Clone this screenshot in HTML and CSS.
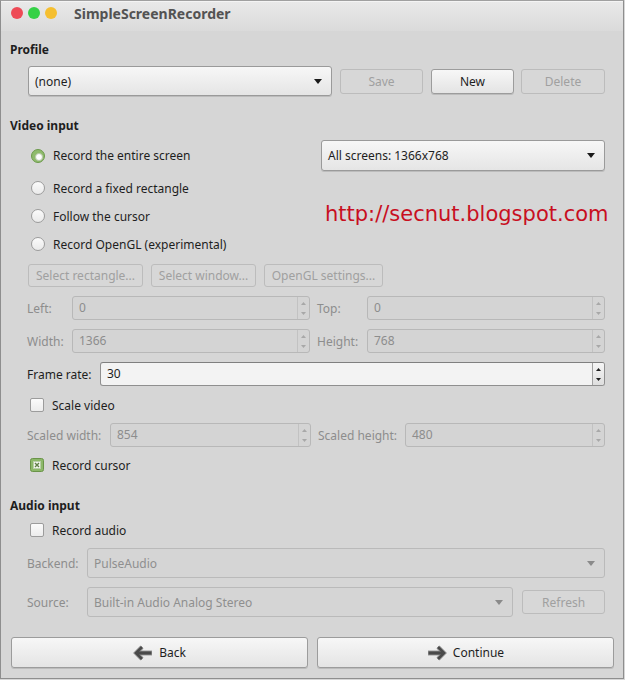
FILE: index.html
```html
<!DOCTYPE html>
<html>
<head>
<meta charset="utf-8">
<link rel="stylesheet" href="styles.css">
</head>
<body>
<div class="window">
  <div class="titlebar">
    <div class="lights">
      <span class="light red"></span>
      <span class="light green"></span>
      <span class="light yellow"></span>
    </div>
    <div class="title">SimpleScreenRecorder</div>
  </div>

  <div class="content">
    <div class="header mt9">Profile</div>
    <div class="row profile-row mt8">
      <div class="combo w-profile">
        <span class="combo-text">(none)</span>
        <svg class="drop" width="8" height="5" viewBox="0 0 8 5"><polygon points="0,0 8,0 4,5" fill="#1a1a1a"/></svg>
      </div>
      <div class="btn disabled w83">Save</div>
      <div class="btn w83">New</div>
      <div class="btn disabled w84 tight">Delete</div>
    </div>

    <div class="header mt20">Video input</div>
    <div class="row indent first-row mt6">
      <div class="choice">
        <span class="radio checked"></span>
        <span>Record the entire screen</span>
      </div>
      <div class="combo w-screens">
        <span class="combo-text">All screens: 1366x768</span>
        <svg class="drop" width="8" height="5" viewBox="0 0 8 5"><polygon points="0,0 8,0 4,5" fill="#1a1a1a"/></svg>
      </div>
    </div>
    <div class="row indent choice-row mt7">
      <div class="choice"><span class="radio"></span><span>Record a fixed rectangle</span></div>
    </div>
    <div class="row indent choice-row mt8">
      <div class="choice"><span class="radio"></span><span>Follow the cursor</span></div>
    </div>
    <div class="row indent choice-row mt8">
      <div class="choice"><span class="radio"></span><span>Record OpenGL (experimental)</span></div>
    </div>

    <div class="row indent button-row mt10">
      <div class="btn disabled small w115">Select rectangle...</div>
      <div class="btn disabled small w105">Select window...</div>
      <div class="btn disabled small w119">OpenGL settings...</div>
    </div>

    <div class="row indent field-row mt9">
      <span class="label disabled-text w45">Left:</span>
      <div class="spin disabled w238">
        <span class="val">0</span>
        <span class="arrows"><svg width="5" height="3" viewBox="0 0 5 3"><polygon points="2.5,0 5,3 0,3" fill="#a8a8a8"/></svg><svg width="5" height="3" viewBox="0 0 5 3"><polygon points="0,0 5,0 2.5,3" fill="#a8a8a8"/></svg></span>
      </div>
      <span class="label disabled-text w50 gap7">Top:</span>
      <div class="spin disabled w238">
        <span class="val">0</span>
        <span class="arrows"><svg width="5" height="3" viewBox="0 0 5 3"><polygon points="2.5,0 5,3 0,3" fill="#a8a8a8"/></svg><svg width="5" height="3" viewBox="0 0 5 3"><polygon points="0,0 5,0 2.5,3" fill="#a8a8a8"/></svg></span>
      </div>
    </div>
    <div class="row indent field-row mt9">
      <span class="label disabled-text w45">Width:</span>
      <div class="spin disabled w238">
        <span class="val">1366</span>
        <span class="arrows"><svg width="5" height="3" viewBox="0 0 5 3"><polygon points="2.5,0 5,3 0,3" fill="#a8a8a8"/></svg><svg width="5" height="3" viewBox="0 0 5 3"><polygon points="0,0 5,0 2.5,3" fill="#a8a8a8"/></svg></span>
      </div>
      <span class="label disabled-text w50 gap7">Height:</span>
      <div class="spin disabled w238">
        <span class="val">768</span>
        <span class="arrows"><svg width="5" height="3" viewBox="0 0 5 3"><polygon points="2.5,0 5,3 0,3" fill="#a8a8a8"/></svg><svg width="5" height="3" viewBox="0 0 5 3"><polygon points="0,0 5,0 2.5,3" fill="#a8a8a8"/></svg></span>
      </div>
    </div>
    <div class="row indent field-row mt9">
      <span class="label w73">Frame rate:</span>
      <div class="spin enabled grow">
        <span class="val">30</span>
        <span class="arrows"><svg width="5" height="3" viewBox="0 0 5 3"><polygon points="2.5,0 5,3 0,3" fill="#1e1e1e"/></svg><svg width="5" height="3" viewBox="0 0 5 3"><polygon points="0,0 5,0 2.5,3" fill="#1e1e1e"/></svg></span>
      </div>
    </div>

    <div class="row indent choice-row mt9">
      <div class="choice check-choice"><span class="checkbox"></span><span>Scale video</span></div>
    </div>

    <div class="row indent field-row mt8">
      <span class="label disabled-text w83">Scaled width:</span>
      <div class="spin disabled w201">
        <span class="val">854</span>
        <span class="arrows"><svg width="5" height="3" viewBox="0 0 5 3"><polygon points="2.5,0 5,3 0,3" fill="#a8a8a8"/></svg><svg width="5" height="3" viewBox="0 0 5 3"><polygon points="0,0 5,0 2.5,3" fill="#a8a8a8"/></svg></span>
      </div>
      <span class="label disabled-text w87 gap7">Scaled height:</span>
      <div class="spin disabled w200">
        <span class="val">480</span>
        <span class="arrows"><svg width="5" height="3" viewBox="0 0 5 3"><polygon points="2.5,0 5,3 0,3" fill="#a8a8a8"/></svg><svg width="5" height="3" viewBox="0 0 5 3"><polygon points="0,0 5,0 2.5,3" fill="#a8a8a8"/></svg></span>
      </div>
    </div>

    <div class="row indent choice-row mt8">
      <div class="choice check-choice">
        <svg class="checked-box" width="14" height="14" viewBox="0 0 14 14">
          <rect x="0.5" y="0.5" width="13" height="13" rx="2" fill="#8cb869" stroke="#6a9449"/>
          <rect x="3.5" y="3.5" width="7" height="7" fill="#f4f7f0" stroke="#b9cfa8"/>
          <path d="M5 5 L9 9 M9 5 L5 9" stroke="#5f7f46" stroke-width="1.4"/>
        </svg>
        <span>Record cursor</span>
      </div>
    </div>

    <div class="header mt21">Audio input</div>
    <div class="row indent choice-row mt6">
      <div class="choice check-choice"><span class="checkbox"></span><span>Record audio</span></div>
    </div>
    <div class="row indent combo-row mt8">
      <span class="label disabled-text w60">Backend:</span>
      <div class="combo disabled grow">
        <span class="combo-text">PulseAudio</span>
        <svg class="drop" width="8" height="5" viewBox="0 0 8 5"><polygon points="0,0 8,0 4,5" fill="#8a8a8a"/></svg>
      </div>
    </div>
    <div class="row indent combo-row mt9">
      <span class="label disabled-text w60">Source:</span>
      <div class="combo disabled w427">
        <span class="combo-text">Built-in Audio Analog Stereo</span>
        <svg class="drop" width="8" height="5" viewBox="0 0 8 5"><polygon points="0,0 8,0 4,5" fill="#8a8a8a"/></svg>
      </div>
      <div class="btn disabled small refresh w83">Refresh</div>
    </div>

    <div class="row bottom-row mt20">
      <div class="btn big">
        <svg class="nav-icon" width="20" height="16" viewBox="0 0 20 16">
          <path d="M9 2 L3 8 L9 14" fill="none" stroke="#9a9a9a" stroke-width="4.4" stroke-linejoin="miter"/>
          <path d="M4 8 H19" stroke="#9a9a9a" stroke-width="5"/>
          <path d="M9 2 L3 8 L9 14" fill="none" stroke="#4a4a4a" stroke-width="2.6" stroke-linejoin="miter"/>
          <path d="M4 8 H18.5" stroke="#4a4a4a" stroke-width="3.2"/>
        </svg>
        <span>Back</span>
      </div>
      <div class="btn big">
        <svg class="nav-icon" width="20" height="16" viewBox="0 0 20 16">
          <path d="M11 2 L17 8 L11 14" fill="none" stroke="#9a9a9a" stroke-width="4.4" stroke-linejoin="miter"/>
          <path d="M1 8 H16" stroke="#9a9a9a" stroke-width="5"/>
          <path d="M11 2 L17 8 L11 14" fill="none" stroke="#4a4a4a" stroke-width="2.6" stroke-linejoin="miter"/>
          <path d="M1.5 8 H16" stroke="#4a4a4a" stroke-width="3.2"/>
        </svg>
        <span>Continue</span>
      </div>
    </div>
  </div>

  <div class="watermark">http://secnut.blogspot.com</div>
</div>
</body>
</html>
```

FILE: styles.css
```css
* {
  box-sizing: border-box;
}

body {
  margin: 0;
  background: #d6d6d6;
  font-family: "Noto Sans", "Open Sans", sans-serif;
  font-size: 12px;
  color: #1e1e1e;
}

.window {
  position: relative;
  width: 624px;
  height: 679px;
  border: 1px solid #8e8e8e;
  border-top-color: #a0a0a0;
  background: #d6d6d6;
}

.titlebar {
  height: 30px;
  display: flex;
  align-items: flex-start;
  padding-left: 10px;
  background: linear-gradient(#e9e9e9, #dadada);
  border-top: 1px solid #f4f4f4;
}

.lights {
  display: flex;
  gap: 5px;
  margin-top: 5px;
}

.light {
  width: 12px;
  height: 12px;
  border-radius: 50%;
}

.light.red { background: #ee4a56; }
.light.green { background: #34d146; }
.light.yellow { background: #f5bf30; }

.title {
  margin-left: 17px;
  margin-top: 2px;
  line-height: 20px;
  font-size: 14px;
  font-weight: bold;
  color: #535353;
}

.content {
  display: flex;
  flex-direction: column;
  padding: 0 18px 0 9px;
}

.header {
  height: 18px;
  line-height: 19px;
  font-weight: bold;
  color: #1e1e1e;
}

.mt6 { margin-top: 6px; }
.mt7 { margin-top: 7px; }
.mt8 { margin-top: 8px; }
.mt9 { margin-top: 9px; }
.mt10 { margin-top: 10px; }
.mt20 { margin-top: 20px; }
.mt21 { margin-top: 21px; }

.row {
  display: flex;
  align-items: center;
}

.indent {
  margin-left: 17px;
}

.profile-row {
  margin-left: 18px;
  height: 30px;
  gap: 8px;
}

.tight {
  margin-left: -1px;
}

.first-row {
  height: 31px;
  justify-content: space-between;
}

.choice-row {
  height: 20px;
}

.button-row {
  height: 23px;
  margin-left: 18px;
  gap: 8px;
}

.field-row {
  height: 24px;
}

.combo-row {
  height: 30px;
}

.bottom-row {
  height: 31px;
  margin-left: 1px;
  margin-right: -9px;
  gap: 9px;
}

.choice {
  display: flex;
  align-items: center;
  gap: 8px;
  padding-left: 4px;
}

.check-choice {
  padding-left: 3px;
}

.radio {
  position: relative;
  width: 14px;
  height: 14px;
  border-radius: 50%;
  border: 1px solid #9c9c9c;
  background: linear-gradient(#fbfbfb, #eaeaea);
}

.radio.checked {
  background: #8fbb6c;
  border-color: #6c9a4c;
}

.radio.checked::after {
  content: "";
  position: absolute;
  left: 3px;
  top: 3px;
  width: 6px;
  height: 6px;
  border-radius: 50%;
  background: #fdfdfd;
  border: 1px solid #b8c8ac;
}

.checkbox {
  width: 14px;
  height: 14px;
  border: 1px solid #9c9c9c;
  border-radius: 2px;
  background: linear-gradient(#fbfbfb, #ececec);
}

.combo {
  height: 100%;
  display: flex;
  align-items: center;
  justify-content: space-between;
  padding: 0 9px 0 6px;
  border: 1px solid #9a9a9a;
  border-radius: 3px;
  background: linear-gradient(#f7f7f7, #e5e5e5);
  box-shadow: 0 1px 0 rgba(0, 0, 0, 0.12);
}

.combo.disabled {
  background: #d5d5d5;
  border-color: #bababa;
  color: #8f8f8f;
  box-shadow: none;
}

.w-profile { width: 304px; }
.w-screens { width: 284px; }
.w427 { width: 427px; }

.btn {
  height: 25px;
  display: flex;
  align-items: center;
  justify-content: center;
  gap: 6px;
  border: 1px solid #9c9c9c;
  border-radius: 3px;
  background: linear-gradient(#f7f7f7, #e4e4e4);
  box-shadow: 0 1px 0 rgba(0, 0, 0, 0.12);
  color: #1e1e1e;
}

.btn.disabled {
  background: #d7d7d7;
  border-color: #bcbcbc;
  color: #a0a0a0;
  box-shadow: none;
}

.btn.small {
  height: 23px;
}

.btn.refresh {
  height: 24px;
  margin-left: 9px;
}

.btn.big {
  flex: 1;
  height: 31px;
}

.w83 { width: 83px; }
.w84 { width: 84px; }
.w105 { width: 105px; }
.w115 { width: 115px; }
.w119 { width: 119px; }

.label {
  flex: none;
  white-space: nowrap;
}

.disabled-text {
  color: #8d8d8d;
}

.w45 { width: 45px; }
.w50 { width: 50px; }
.w60 { width: 60px; }
.w73 { width: 73px; }
.w87 { width: 87px; }
.gap7 { margin-left: 7px; }

.label.w83 { width: 83px; }

.spin {
  height: 24px;
  display: flex;
  border: 1px solid #b8b8b8;
  border-radius: 3px;
  background: #d4d4d4;
  color: #8d8d8d;
  overflow: hidden;
}

.spin.enabled {
  background: #f3f3f3;
  border-color: #8f8f8f;
  border-top-color: #7f7f7f;
  color: #1e1e1e;
}

.w238 { width: 238px; }
.w201 { width: 201px; }
.w200 { width: 200px; }
.grow { flex: 1; }

.val {
  flex: 1;
  padding-left: 6px;
  line-height: 22px;
}

.arrows {
  width: 12px;
  display: flex;
  flex-direction: column;
  align-items: center;
  justify-content: center;
  gap: 7px;
  border-left: 1px solid #c2c2c2;
}

.arrows svg {
  display: block;
}

.spin.enabled .arrows {
  border-left-color: #a2a2a2;
  background: linear-gradient(#f6f6f6, #dedede);
}

.drop {
  display: block;
  flex: none;
}

.nav-icon {
  display: block;
}

.watermark {
  position: absolute;
  left: 324px;
  top: 201px;
  font-family: "DejaVu Sans", sans-serif;
  font-size: 21px;
  line-height: 24px;
  color: #c80f1f;
}
```
